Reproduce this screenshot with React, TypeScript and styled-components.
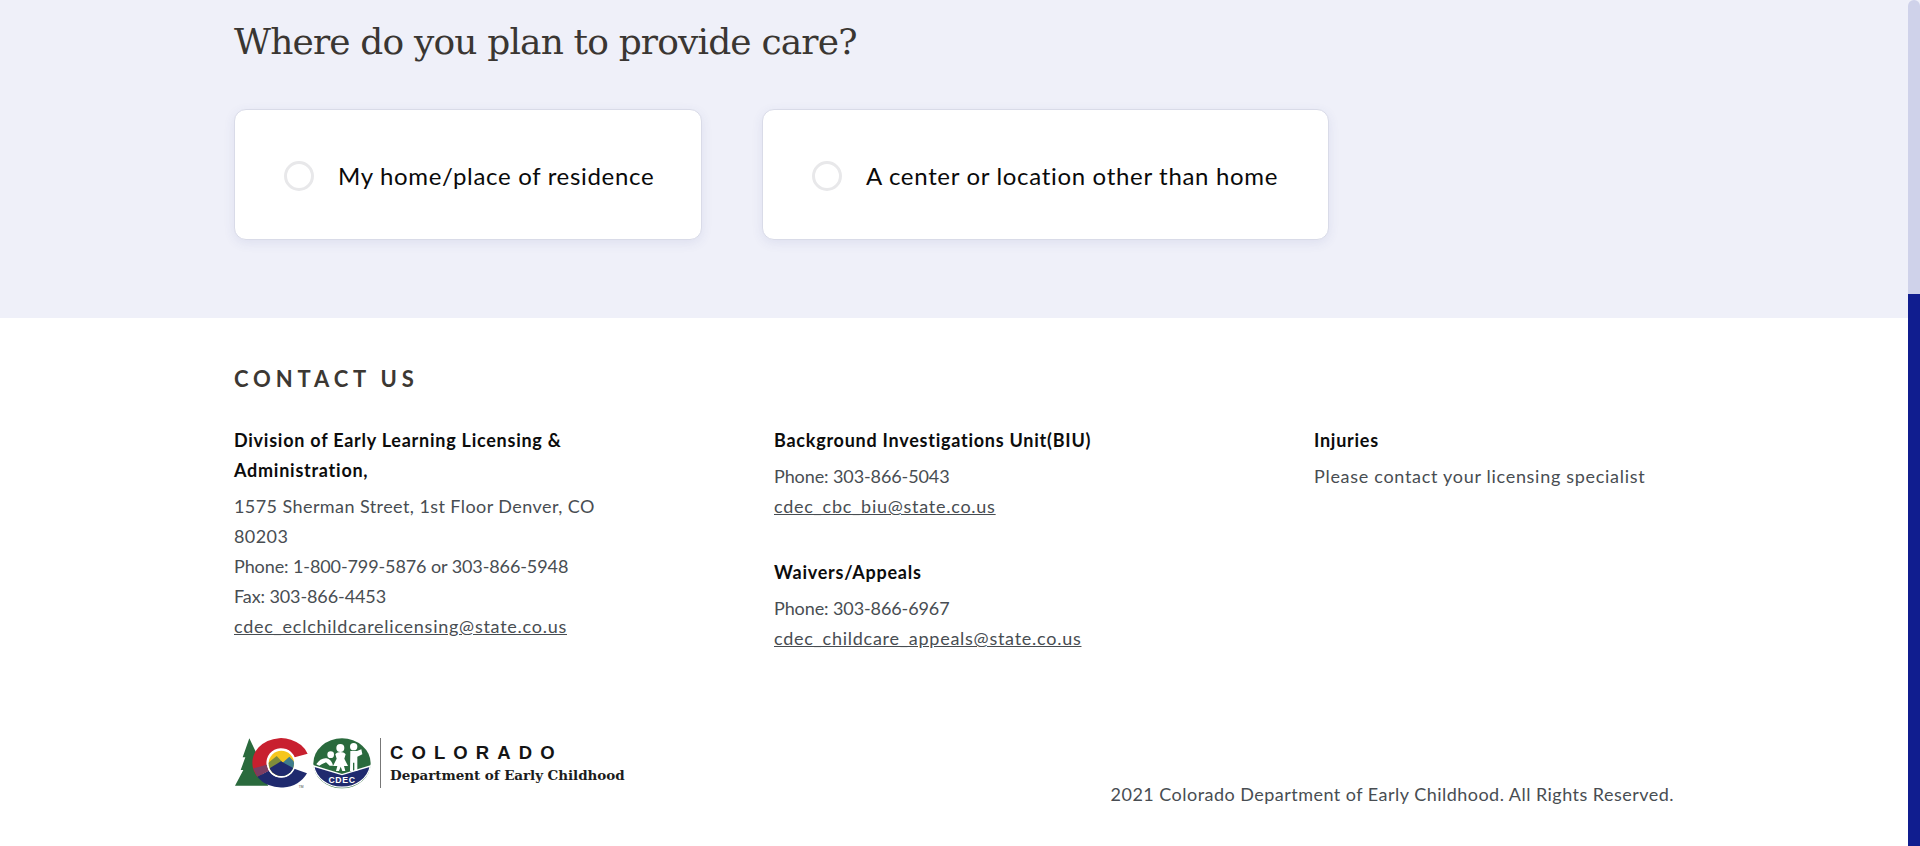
import React from "react";
import styled, { createGlobalStyle } from "styled-components";

const Global = createGlobalStyle`
  html, body { margin: 0; padding: 0; height: 846px; overflow: hidden; background: #fff; }
  #root { height: 846px; }
  * { box-sizing: border-box; }
`;
const Shell = styled.div`display: flex; width: 1920px; height: 846px; font-family: "Lato", "Noto Sans", sans-serif;`;
const Page = styled.main`flex: 1; min-width: 0; display: flex; flex-direction: column;`;
const Scrollbar = styled.div`width: 12px; display: flex; flex-direction: column; background: #eff0f9;`;
const Track = styled.div`height: 294px; background: #cfd2ea; border-radius: 6px 6px 0 0;`;
const Thumb = styled.div`flex: 1; background: #101d8f;`;
const Question = styled.section`height: 318px; background: #eff0f9; padding: 20px 234px 0;`;
const Heading = styled.h1`margin: 0 0 45px; height: 44px; font: 400 36px/44px "DejaVu Serif", serif; color: #3a3632; letter-spacing: -.85px; white-space: nowrap;`;
const Options = styled.div`display: flex; gap: 60px;`;
const Option = styled.label<{ $w: number }>`
  width: ${p => p.$w}px; height: 131px; padding: 2px 0 0 49px; display: flex; align-items: center; gap: 24px;
  background: #fff; border: 1px solid #d9dbe8; border-radius: 12px; box-shadow: 0 3px 12px rgba(60,65,140,.09);
  font-size: 24px; color: #0a0a0a; letter-spacing: .68px; white-space: nowrap;
`;
const Radio = styled.span`width: 30px; height: 30px; flex: none; border: 3px solid #e8e8ea; border-radius: 50%; background: #fff;`;
const Footer = styled.footer`flex: 1; padding: 46px 234px 0; position: relative; display: flex; flex-direction: column;`;
const FooterTitle = styled.h2`margin: 0 0 31px; font-size: 22px; line-height: 30px; font-weight: 700; letter-spacing: 4.85px; color: #3c3833;`;
const Columns = styled.div`display: grid; grid-template-columns: 540px 540px 1fr; height: 310px;`;
const Column = styled.div`max-width: 374px; font-size: 18px; line-height: 30px; color: #484d52; letter-spacing: .42px;`;
const Block = styled.div`& + & { margin-top: 36px; }`;
const Name = styled.h3`margin: 0 0 6px; font-size: 18px; line-height: 30px; font-weight: 700; color: #0c0c0c; letter-spacing: .75px;`;
const Line = styled.div``;
const NumberLine = styled.div`letter-spacing: -.1px;`;
const Sentence = styled.div`letter-spacing: .7px;`;
const Mail = styled.a`display: block; color: inherit; text-decoration: underline; white-space: nowrap; letter-spacing: .74px;`;
const Bottom = styled.div`display: flex; justify-content: space-between; align-items: flex-end; height: 77px;`;
const Logo = styled.div`display: flex; align-items: center; height: 55px; margin-bottom: 22px;`;
const Marks = styled.svg`width: 140px; height: 55px; flex: none; display: block;`;
const Rule = styled.span`width: 1px; height: 50px; margin: 0 9px 0 6px; background: #777;`;
const LogoText = styled.div`display: flex; flex-direction: column; gap: 3px;`;
const State = styled.span`font: 700 18.5px/22px "Liberation Sans", sans-serif; letter-spacing: 8.1px; color: #141414;`;
const Dept = styled.span`font: 700 13.5px/16px "DejaVu Serif", serif; letter-spacing: -.06px; color: #1c1c1c; white-space: nowrap;`;
const Copy = styled.div`font-size: 18px; line-height: 24px; letter-spacing: .47px; color: #484d52; margin-bottom: 6px;`;

const LogoMarks = () => (
  <Marks viewBox="42 45 420 165" aria-hidden="true">
    <defs>
      <clipPath id="sun"><circle cx="184" cy="130" r="38" /></clipPath>
    </defs>
    <polygon fill="#2a6a3d" points="88,55 112,105 104,105 122,140 112,140 145,197 45,197 70,150 62,150 76,112 68,112" />
    <path fill="#c8202f" d="M263 101A86 74 0 1 0 112 170L146 152A44 44 0 1 1 224 112Z" />
    <path fill="#1f2a6e" d="M112 170A86 74 0 0 0 261 160L223 146A44 44 0 0 1 146 152Z" />
    <path fill="#7b3d62" d="M100 145L112 170L146 152L140 134Z" />
    <circle cx="184" cy="130" r="43" fill="#fff" />
    <g clipPath="url(#sun)">
      <rect x="140" y="90" width="90" height="80" fill="#f6c61c" />
      <polygon fill="#7f8c3b" points="140,132 170,108 200,140 200,170 140,170" />
      <polygon fill="#3f7c8c" points="188,128 208,110 232,135 232,170 188,170" />
      <polygon fill="#1f2a6e" points="140,150 183,124 230,150 230,175 140,175" />
    </g>
    <text x="236" y="203" fontFamily="Liberation Sans" fontSize="10" fill="#444">TM</text>
    <ellipse cx="366" cy="130" rx="86" ry="75" fill="#2a6a3d" />
    <path fill="#1f2a6e" stroke="#fff" strokeWidth="4" d="M281 138L366 164L451 138A86 75 0 0 1 281 138Z" />
    <text x="366" y="190" textAnchor="middle" fontFamily="Liberation Sans" fontWeight="700" fontSize="26" letterSpacing="2" fill="#fff">CDEC</text>
    <g fill="#fff">
      <circle cx="332" cy="104" r="10" />
      <path d="M289 133C296 121 308 113 320 115C330 117 337 126 339 137L329 137L318 127L305 133L298 137Z" />
      <circle cx="361" cy="84" r="12" />
      <path d="M346 103C353 94 370 94 377 103L373 116L384 138H372L376 153H367L362 140L357 153H348L352 138H339L350 116Z" />
      <circle cx="401" cy="80" r="11" />
      <path d="M391 93H411L424 88L427 103L412 110V153H403V128H399V153H390Z" />
    </g>
  </Marks>
);

export default function App() {
  return (
    <Shell>
      <Global />
      <Page>
        <Question>
          <Heading>Where do you plan to provide care?</Heading>
          <Options>
            <Option $w={468}><Radio />My home/place of residence</Option>
            <Option $w={567}><Radio />A center or location other than home</Option>
          </Options>
        </Question>
        <Footer>
          <FooterTitle>CONTACT US</FooterTitle>
          <Columns>
            <Column>
              <Block>
                <Name>Division of Early Learning Licensing &amp; Administration,</Name>
                <Line>1575 Sherman Street, 1st Floor Denver, CO 80203</Line>
                <NumberLine>Phone: 1-800-799-5876 or 303-866-5948</NumberLine>
                <NumberLine>Fax: 303-866-4453</NumberLine>
                <Mail href="#">cdec_eclchildcarelicensing@state.co.us</Mail>
              </Block>
            </Column>
            <Column>
              <Block>
                <Name>Background Investigations Unit(BIU)</Name>
                <NumberLine>Phone: 303-866-5043</NumberLine>
                <Mail href="#">cdec_cbc_biu@state.co.us</Mail>
              </Block>
              <Block>
                <Name>Waivers/Appeals</Name>
                <NumberLine>Phone: 303-866-6967</NumberLine>
                <Mail href="#">cdec_childcare_appeals@state.co.us</Mail>
              </Block>
            </Column>
            <Column>
              <Block>
                <Name>Injuries</Name>
                <Sentence>Please contact your licensing specialist</Sentence>
              </Block>
            </Column>
          </Columns>
          <Bottom>
            <Logo>
              <LogoMarks />
              <Rule />
              <LogoText>
                <State>COLORADO</State>
                <Dept>Department of Early Childhood</Dept>
              </LogoText>
            </Logo>
            <Copy>2021 Colorado Department of Early Childhood. All Rights Reserved.</Copy>
          </Bottom>
        </Footer>
      </Page>
      <Scrollbar><Track /><Thumb /></Scrollbar>
    </Shell>
  );
}
